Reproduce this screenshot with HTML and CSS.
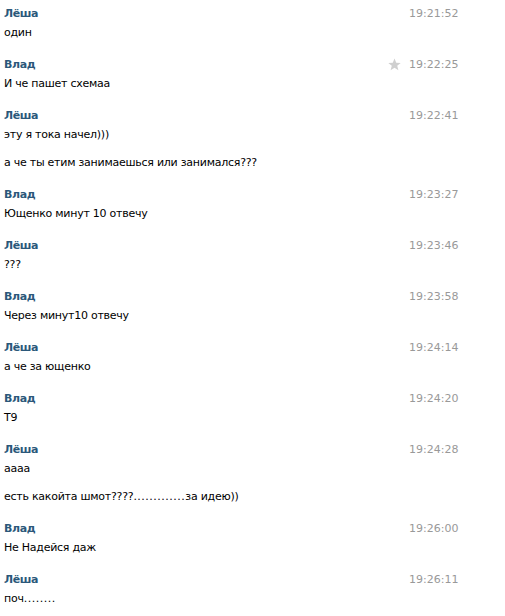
FILE: index.html
```html
<!DOCTYPE html>
<html lang="ru">
<head>
<meta charset="utf-8">
<link rel="stylesheet" href="styles.css">
</head>
<body>
<div class="history">
  <div class="msg">
    <div class="name">Лёша</div>
    <div class="time">19:21:52</div>
    <div class="body"><p>один</p></div>
  </div>
  <div class="msg">
    <div class="name">Влад</div>
    <div class="time"><svg class="star" viewBox="0 0 12 12" width="13" height="13"><path d="M6 0.4 L7.6 4.3 L11.7 4.5 L8.5 7.1 L9.6 11.2 L6 8.9 L2.4 11.2 L3.5 7.1 L0.3 4.5 L4.4 4.3 Z" fill="#cfcfcf"/></svg>19:22:25</div>
    <div class="body"><p>И че пашет схемаа</p></div>
  </div>
  <div class="msg">
    <div class="name">Лёша</div>
    <div class="time">19:22:41</div>
    <div class="body"><p>эту я тока начел)))</p><p>а че ты етим занимаешься или занимался???</p></div>
  </div>
  <div class="msg">
    <div class="name">Влад</div>
    <div class="time">19:23:27</div>
    <div class="body"><p>Ющенко минут 10 отвечу</p></div>
  </div>
  <div class="msg">
    <div class="name">Лёша</div>
    <div class="time">19:23:46</div>
    <div class="body"><p>???</p></div>
  </div>
  <div class="msg">
    <div class="name">Влад</div>
    <div class="time">19:23:58</div>
    <div class="body"><p>Через минут10 отвечу</p></div>
  </div>
  <div class="msg">
    <div class="name">Лёша</div>
    <div class="time">19:24:14</div>
    <div class="body"><p>а че за ющенко</p></div>
  </div>
  <div class="msg">
    <div class="name">Влад</div>
    <div class="time">19:24:20</div>
    <div class="body"><p>Т9</p></div>
  </div>
  <div class="msg">
    <div class="name">Лёша</div>
    <div class="time">19:24:28</div>
    <div class="body"><p>аааа</p><p>есть какойта шмот????<span class="dots">.............</span>за идею))</p></div>
  </div>
  <div class="msg">
    <div class="name">Влад</div>
    <div class="time">19:26:00</div>
    <div class="body"><p>Не Надейся даж</p></div>
  </div>
  <div class="msg">
    <div class="name">Лёша</div>
    <div class="time">19:26:11</div>
    <div class="body"><p>поч<span class="dots">........</span></p></div>
  </div>
</div>
</body>
</html>
```
FILE: styles.css
```css
html, body {
  margin: 0;
  padding: 0;
  background: #fff;
}
body {
  font-family: "DejaVu Sans", Tahoma, sans-serif;
  font-size: 11px;
  line-height: 14px;
  color: #000;
}
.history {
  display: flex;
  flex-direction: column;
}
.msg {
  display: grid;
  grid-template-columns: 1fr 96px;
  row-gap: 5px;
  padding: 7px 0 11px 4px;
}
.name {
  font-weight: bold;
  color: #2b587a;
  letter-spacing: -0.4px;
}
.time {
  position: relative;
  color: #999;
}
.star {
  position: absolute;
  right: calc(100% + 8px);
  top: 0;
}
.body {
  grid-column: 1 / 2;
  display: flex;
  flex-direction: column;
  gap: 14px;
  letter-spacing: -0.25px;
}
.body p {
  margin: 0;
}
.dots {
  letter-spacing: 0.5px;
}
```
